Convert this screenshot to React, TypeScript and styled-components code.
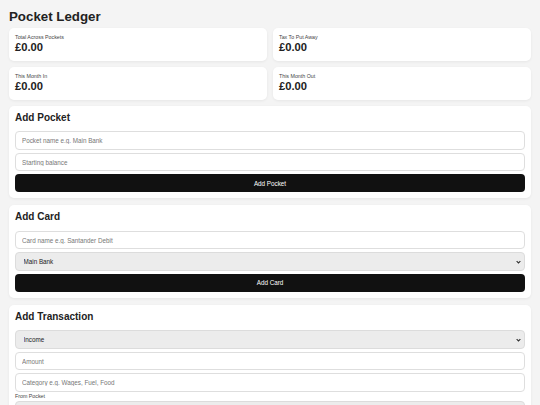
import React from "react";
import styled, { createGlobalStyle } from "styled-components";

const GlobalStyle = createGlobalStyle`
  html, body {
    margin: 0;
    padding: 0;
    background: #f4f4f4;
    font-family: "Liberation Sans", Arial, sans-serif;
    color: #222;
  }
  * {
    box-sizing: border-box;
  }
`;

const chevron =
  "url(\"data:image/svg+xml;utf8,<svg xmlns='http://www.w3.org/2000/svg' width='8' height='6' viewBox='0 0 8 6'><path d='M1 1.5 L4 4.5 L7 1.5' fill='none' stroke='%23333' stroke-width='1.8'/></svg>\")";

const Page = styled.div`
  padding: 8.5px 9px 20px;
`;

const Title = styled.h1`
  margin: 0 0 4px;
  font-size: 13.3px;
  line-height: 15.3px;
  font-weight: 700;
  color: #222;
`;

const StatGrid = styled.div`
  display: grid;
  grid-template-columns: 1fr 1fr;
  gap: 6px;
  margin-bottom: 6px;
`;

const Card = styled.div`
  background: #fff;
  border-radius: 5px;
  box-shadow: 0 1px 3px rgba(0, 0, 0, 0.06);
`;

const StatCard = styled(Card)`
  height: 33px;
  padding: 6px 6px 0;
`;

const StatLabel = styled.div`
  font-size: 5.3px;
  line-height: 6.1px;
  color: #444;
  margin-bottom: 0.8px;
`;

const StatValue = styled.div`
  font-size: 11.2px;
  line-height: 12.9px;
  font-weight: 700;
  color: #222;
`;

const Section = styled(Card)`
  padding: 6px 6px 6px;
  margin-bottom: 7px;
  display: flex;
  flex-direction: column;
  gap: 3px;
`;

const SectionTitle = styled.h2`
  margin: 0 0 5px;
  font-size: 10px;
  line-height: 11.5px;
  font-weight: 700;
  color: #222;
`;

const Input = styled.input`
  height: 18.5px;
  width: 100%;
  padding: 0 6px;
  border: 1px solid #dedede;
  border-radius: 4px;
  background: #fff;
  font-family: inherit;
  font-size: 6.3px;
  color: #222;
  outline: none;

  &::placeholder {
    color: #777;
  }
`;

const Select = styled.select`
  appearance: none;
  height: 18.5px;
  width: 100%;
  padding: 0 14px 0 7.5px;
  border: 1px solid #dcdcdc;
  border-radius: 4px;
  background: #ececec ${chevron} no-repeat right 3px center / 5px 4px;
  font-family: inherit;
  font-size: 6.3px;
  color: #222;
  outline: none;
`;

const Button = styled.button`
  height: 18px;
  width: 100%;
  border: none;
  border-radius: 4px;
  background: #111;
  color: #fff;
  font-family: inherit;
  font-size: 6.3px;
  cursor: pointer;
`;

const FieldLabel = styled.label`
  font-size: 5.3px;
  line-height: 6px;
  color: #444;
  margin: -1.5px 0 -1.5px;
`;

const stats = [
  { label: "Total Across Pockets", value: "£0.00" },
  { label: "Tax To Put Away", value: "£0.00" },
  { label: "This Month In", value: "£0.00" },
  { label: "This Month Out", value: "£0.00" },
];

export default function App() {
  return (
    <Page>
      <GlobalStyle />
      <Title>Pocket Ledger</Title>
      <StatGrid>
        {stats.map((s) => (
          <StatCard key={s.label}>
            <StatLabel>{s.label}</StatLabel>
            <StatValue>{s.value}</StatValue>
          </StatCard>
        ))}
      </StatGrid>

      <Section>
        <SectionTitle>Add Pocket</SectionTitle>
        <Input placeholder="Pocket name e.g. Main Bank" />
        <Input placeholder="Starting balance" />
        <Button>Add Pocket</Button>
      </Section>

      <Section>
        <SectionTitle>Add Card</SectionTitle>
        <Input placeholder="Card name e.g. Santander Debit" />
        <Select defaultValue="main">
          <option value="main">Main Bank</option>
        </Select>
        <Button>Add Card</Button>
      </Section>

      <Section>
        <SectionTitle>Add Transaction</SectionTitle>
        <Select defaultValue="income">
          <option value="income">Income</option>
          <option value="expense">Expense</option>
        </Select>
        <Input placeholder="Amount" />
        <Input placeholder="Category e.g. Wages, Fuel, Food" />
        <FieldLabel>From Pocket</FieldLabel>
        <Select defaultValue="main">
          <option value="main">Main Bank</option>
        </Select>
      </Section>
    </Page>
  );
}
